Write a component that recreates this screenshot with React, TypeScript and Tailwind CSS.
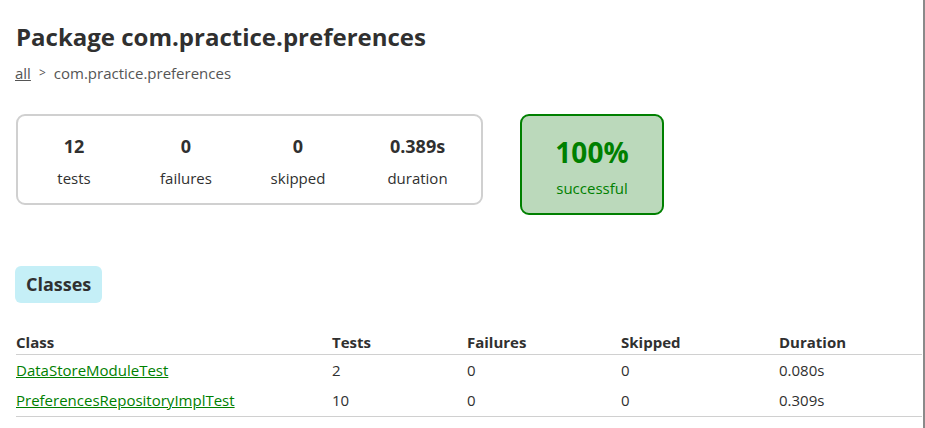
import React from "react";

const rows = [
  { name: "DataStoreModuleTest", tests: "2", failures: "0", skipped: "0", duration: "0.080s" },
  { name: "PreferencesRepositoryImplTest", tests: "10", failures: "0", skipped: "0", duration: "0.309s" },
];

export default function App() {
  return (
    <div className="flex h-[428px] w-[925px] overflow-hidden bg-white text-[#303030]" style={{ fontFamily: '"Open Sans", "Noto Sans CJK KR", sans-serif' }}>
      <div className="flex-1 pl-4 pt-[19px]">
        <h1 className="text-[24px] font-bold leading-[36px]">Package com.practice.preferences</h1>
        <div className="mt-[8px] flex items-center text-[15px] leading-[20px] text-[#555]">
          <a className="-ml-px underline">all</a>
          <span className="mx-[8px] text-[12px]">&gt;</span>
          <span>com.practice.preferences</span>
        </div>
        <div className="mt-[31px] flex items-start">
          <div className="flex h-[91px] w-[467px] items-start rounded-[9px] border-2 border-[#d0d0d0] pt-[18px]">
            {[
              ["12", "tests"],
              ["0", "failures"],
              ["0", "skipped"],
              ["0.389s", "duration"],
            ].map(([n, l], i) => (
              <div key={l} className={`${i === 3 ? "flex-1" : "w-[112px]"} flex flex-col items-center`}>
                <div className="text-[18px] font-bold leading-[24px]">{n}</div>
                <div className="mt-[10px] text-[15px] leading-[20px]">{l}</div>
              </div>
            ))}
          </div>
          <div className="ml-[37px] flex h-[101px] w-[144px] flex-col items-center rounded-[9px] border-2 border-[#008000] bg-[#bbd9bb] pt-[17px] text-[#008000]">
            <div className="text-[28px] font-bold leading-[38px]">100%</div>
            <div className="mt-[7px] text-[15px] leading-[20px]">successful</div>
          </div>
        </div>
        <div className="-ml-px mt-[51px] inline-flex h-[37px] items-center rounded-[6px] bg-[#c5eff7] px-[11px] text-[18px] font-bold">Classes</div>
        <table className="mt-[28px] w-[906px] border-collapse text-left text-[15px]">
          <thead>
            <tr className="border-b border-[#d0d0d0]">
              <th className="w-[316px] p-0 font-bold leading-[22px]">Class</th>
              <th className="w-[135px] p-0 font-bold">Tests</th>
              <th className="w-[154px] p-0 font-bold">Failures</th>
              <th className="w-[158px] p-0 font-bold">Skipped</th>
              <th className="p-0 font-bold">Duration</th>
            </tr>
          </thead>
          <tbody>
            {rows.map((r, i) => (
              <tr key={r.name} className={i === rows.length - 1 ? "border-b border-[#d0d0d0]" : ""}>
                <td className="h-[31px] p-0">
                  <a className="text-[#008000] underline">{r.name}</a>
                </td>
                <td className="p-0">{r.tests}</td>
                <td className="p-0">{r.failures}</td>
                <td className="p-0">{r.skipped}</td>
                <td className="p-0">{r.duration}</td>
              </tr>
            ))}
          </tbody>
        </table>
      </div>
      <div className="w-[2px] bg-[#8a8a8a]" />
    </div>
  );
}
